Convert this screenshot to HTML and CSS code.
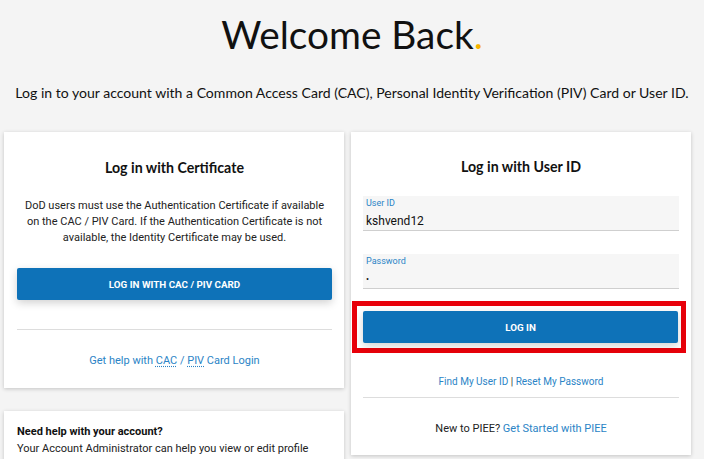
FILE: index.html
```html
<!DOCTYPE html>
<html lang="en">
<head>
  <meta charset="UTF-8">
  <title>PIEE - Welcome Back</title>
  <link rel="stylesheet" href="styles.css">
</head>
<body>

<div class="intro">
  <h1>Welcome Back<span class="dot">.</span></h1>
  <p>Log in to your account with a Common Access Card (CAC), Personal Identity Verification (PIV) Card or User ID.</p>
</div>

<div class="login-grid">
  <div class="column">
    <div class="card cert-card">
      <h2>Log in with Certificate</h2>
      <p class="note">DoD users must use the Authentication Certificate if available on the CAC / PIV Card. If the Authentication Certificate is not available, the Identity Certificate may be used.</p>
      <button class="btn">Log in with CAC / PIV Card</button>
      <hr>
      <a class="link" href="#">Get help with <abbr title="Common Access Card">CAC</abbr> / <abbr title="Personal Identity Verification">PIV</abbr> Card Login</a>
    </div>

    <div class="card help-card">
      <h3>Need help with your account?</h3>
      <p>Your Account Administrator can help you view or edit profile</p>
    </div>
  </div>

  <div class="column">
    <div class="card user-card">
      <h2>Log in with User ID</h2>
      <label class="field">
        <span class="field-label">User ID</span>
        <input type="text" value="kshvend12">
      </label>
      <label class="field">
        <span class="field-label">Password</span>
        <input type="password" value="x">
      </label>
      <div class="highlight">
        <button class="btn">Log in</button>
      </div>
      <div class="links">
        <a href="#">Find My User ID</a> <span class="sep">|</span> <a href="#">Reset My Password</a>
      </div>
      <hr>
      <p class="new">New to PIEE? <a href="#">Get Started with PIEE</a></p>
    </div>
  </div>
</div>

</body>
</html>
```

FILE: styles.css
```css
body {
  margin: 0;
  background: #f4f4f4;
  font-family: Roboto, Arial, sans-serif;
  color: #222;
}
.intro {
  text-align: center;
  font-family: Lato, Arial, sans-serif;
}
.intro h1 {
  margin: 0;
  padding-top: 10px;
  font-size: 38.8px;
  font-weight: 400;
  line-height: 48px;
  color: #111;
}
.dot {
  color: #f5b400;
}
.intro p {
  margin: 25px 0 0;
  font-size: 14.05px;
  line-height: 20px;
  white-space: nowrap;
  color: #111;
}
.login-grid {
  display: grid;
  grid-template-columns: 340px 340px;
  gap: 7px;
  padding: 29px 0 0 4px;
}
.column {
  display: flex;
  flex-direction: column;
  gap: 23px;
}
.card {
  background: #fff;
  box-shadow: 0 1px 4px rgba(0,0,0,0.2);
  padding: 0 12px 0 13px;
}
h2 {
  margin: 0;
  font-family: Lato, Arial, sans-serif;
  font-size: 14.2px;
  font-weight: 700;
  text-align: center;
  color: #111;
}
.cert-card {
  padding-top: 27px;
  padding-bottom: 19px;
  text-align: center;
}
.note {
  margin: 22px 0 0;
  padding: 0 6px;
  font-size: 11px;
  line-height: 16px;
  color: #222;
}
.btn {
  display: block;
  width: 100%;
  height: 32px;
  border: none;
  border-radius: 2px;
  background: #0e72b8;
  color: #fff;
  font-family: Roboto, Arial, sans-serif;
  font-size: 9.8px;
  font-weight: 700;
  text-transform: uppercase;
  box-shadow: 0 3px 8px rgba(0,0,0,0.18);
  cursor: pointer;
}
.cert-card .btn {
  margin-top: 22px;
}
hr {
  border: none;
  border-top: 1px solid #ddd;
  margin: 29px 0 0;
}
.link, .links a, .new a {
  color: #2b84c6;
  text-decoration: none;
}
.cert-card .link {
  display: block;
  margin-top: 23px;
  font-size: 11px;
  line-height: 16px;
}
abbr {
  text-decoration: underline dotted;
  text-underline-offset: 2px;
}
.help-card {
  padding-top: 13px;
  padding-bottom: 10px;
}
.help-card h3 {
  margin: 0;
  font-size: 11px;
  font-weight: 700;
  line-height: 16px;
  color: #111;
}
.help-card p {
  margin: 1px 0 0;
  font-size: 11px;
  line-height: 16px;
}
.user-card {
  padding: 26px 12px 18px 12px;
}
.field {
  display: flex;
  flex-direction: column;
  height: 34px;
  margin-top: 21px;
  padding: 0 3px;
  background: #f6f6f6;
  border-bottom: 1px solid #cfcfcf;
}
.field + .field {
  margin-top: 23px;
}
.field-label {
  margin-top: 1px;
  font-size: 9px;
  line-height: 12px;
  color: #2b84c6;
}
.field input {
  border: none;
  background: transparent;
  padding: 0;
  margin-top: 4px;
  font-family: Roboto, Arial, sans-serif;
  font-size: 12px;
  line-height: 16px;
  color: #111;
  outline: none;
}
.field input[type="password"] {
  font-size: 9px;
}
.highlight {
  margin: 12px -7px 0 -11px;
  padding: 5px 3px 5px 6px;
  border: 5px solid #e8000a;
}
.links {
  margin-top: 22px;
  font-size: 10px;
  line-height: 14px;
  text-align: center;
}
.sep {
  color: #333;
}
.user-card hr {
  margin-top: 8px;
}
.new {
  margin: 23px 0 0;
  font-size: 11px;
  line-height: 16px;
  text-align: center;
  color: #222;
}
```
